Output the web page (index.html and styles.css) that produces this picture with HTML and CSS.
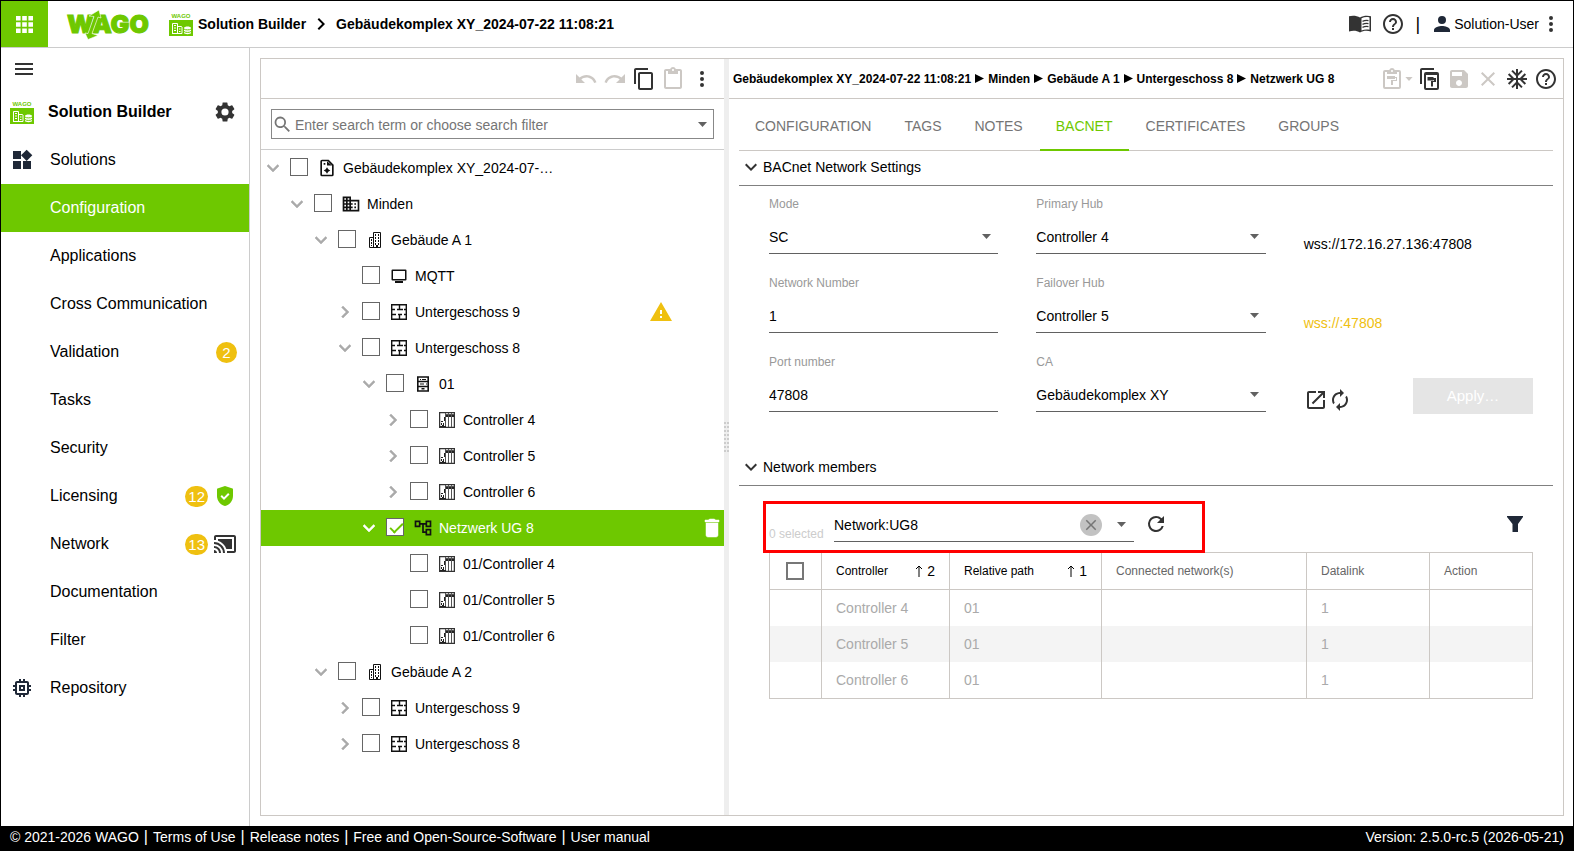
FILE: index.html
```html
<!DOCTYPE html>
<html lang="en">
<head>
    <meta charset="utf-8">
    <title>Solution Builder</title>
    <link rel="stylesheet" href="styles.css">
</head>
<body>
    <!-- icon definitions -->
    <svg class="defs" aria-hidden="true">
        <symbol id="i-down" viewBox="0 0 24 24"><path d="M16.59 8.59L12 13.17 7.41 8.59 6 10l6 6 6-6z"/></symbol>
        <symbol id="i-right" viewBox="0 0 24 24"><path d="M10 6L8.59 7.41 13.17 12l-4.58 4.59L10 18l6-6z"/></symbol>
        <symbol id="i-more" viewBox="0 0 24 24"><path d="M12 8a2 2 0 1 0 0-4 2 2 0 0 0 0 4zm0 2a2 2 0 1 0 0 4 2 2 0 0 0 0-4zm0 6a2 2 0 1 0 0 4 2 2 0 0 0 0-4z"/></symbol>
        <symbol id="i-help" viewBox="0 0 24 24"><path d="M11 18h2v-2h-2v2zm1-16C6.48 2 2 6.48 2 12s4.48 10 10 10 10-4.48 10-10S17.52 2 12 2zm0 18c-4.41 0-8-3.59-8-8s3.59-8 8-8 8 3.59 8 8-3.59 8-8 8zm0-14c-2.21 0-4 1.79-4 4h2c0-1.1.9-2 2-2s2 .9 2 2c0 2-3 1.75-3 5h2c0-2.25 3-2.5 3-5 0-2.21-1.79-4-4-4z"/></symbol>
        <symbol id="i-caret" viewBox="0 0 9 5"><path d="M0 0h9L4.500 5z"/></symbol>
        <symbol id="i-close" viewBox="0 0 24 24"><path d="M19 6.410L17.590 5 12 10.590 6.410 5 5 6.410 10.590 12 5 17.590 6.410 19 12 13.410 17.590 19 19 17.590 13.410 12z"/></symbol>
        <symbol id="i-play" viewBox="0 0 9 9"><path d="M0 0l9 4.500L0 9z"/></symbol>
        <symbol id="i-project" viewBox="0 0 24 24">
            <path d="M14 2H6a2 2 0 0 0-2 2v16a2 2 0 0 0 2 2h12a2 2 0 0 0 2-2V8l-6-6zM6 20V4h7l5 5v11H6z"/>
            <path d="M12 11l1.500 2.500 2.500 1.500-2.500 1.500L12 19l-1.500-2.500L8 15l2.500-1.500zM8 6h2v2H8zM12 4l6 5h-6z"/>
        </symbol>
        <symbol id="i-city" viewBox="0 0 24 24"><path d="M12 7V3H2v18h20V7H12zM6 19H4v-2h2v2zm0-4H4v-2h2v2zm0-4H4V9h2v2zm0-4H4V5h2v2zm4 12H8v-2h2v2zm0-4H8v-2h2v2zm0-4H8V9h2v2zm0-4H8V5h2v2zm10 12h-8v-2h2v-2h-2v-2h2v-2h-2V9h8v10zm-2-8h-2v2h2v-2zm0 4h-2v2h2v-2z"/></symbol>
        <symbol id="i-building" viewBox="0 0 16 16">
            <path d="M2.500 15.500v-10h4v-5h7v15z" fill="none" stroke="currentColor"/>
            <path d="M6 5h1v11H6zM8 2h1v2H8zM11 2h1v2h-1zM8 5h1v2H8zM11 5h1v2h-1zM8 8h1v2H8zM11 8h1v2h-1zM8 11h1v2H8zM11 11h1v2h-1zM4 7h1v2H4zM4 10h1v2H4zM9 13h2v3H9zM4 13h1v1H4z"/>
        </symbol>
        <symbol id="i-monitor" viewBox="0 0 16 16"><path d="M1.500 1.500h13a1 1 0 0 1 1 1v9a1 1 0 0 1-1 1h-13a1 1 0 0 1-1-1v-9a1 1 0 0 1 1-1zM2 3v8h12V3zM4 12h8v3H4z" fill-rule="evenodd"/></symbol>
        <symbol id="i-floor" viewBox="0 0 16 16">
            <path d="M.7.7h14.600v14.600H.700zM8.500 1v4.500M6 5.500h6M1 5.500h3M1 10.500h4M7 10.500h4M13 10.500h2M8.500 10.500V15M13 5.500h2" fill="none" stroke="currentColor" stroke-width="1.400"/>
        </symbol>
        <symbol id="i-rack" viewBox="0 0 16 16">
            <path d="M2.800 1h10.400v14H2.800zM3 5.500h10M3 10.500h10" fill="none" stroke="currentColor" stroke-width="1.600"/>
            <path d="M5 3h1v1H5zM7 3h4v1H7zM5 7.500h4v1H5zM11 7.500h1v1h-1zM6.500 12h3v1.500h-3z"/>
        </symbol>
        <symbol id="i-controller" viewBox="0 0 16 16">
            <path d="M.6.6h14.800v14.800H.600z" fill="none" stroke="#333" stroke-width="1.300"/>
            <path d="M6 1h1v14H6zM9 1h1v14H9zM12 1h1v14h-1zM6 2h9v1H6z" fill="#555"/>
            <path d="M7 3h2v2H7zM10 3h2v2h-2zM13 3h2v2h-2zM5 5h1v4H5zM2 9h2v1H2zM2 11h1v2H2zM4 11h1v2H4zM3 13h2v1H3zM1 14h6v1H1z" fill="#222"/>
        </symbol>
        <symbol id="i-network" viewBox="0 0 24 24"><path d="M22 11V3h-7v3H9V3H2v8h7V8h2v10h4v3h7v-8h-7v3h-2V8h2v3h7zM7 9H4V5h3v4zm10 6h3v4h-3v-4zm0-10h3v4h-3V5z"/></symbol>
        <symbol id="i-app" viewBox="0 0 24 24">
            <text x="12" y="6" text-anchor="middle" class="app-icon-text" fill="#6ec800">WAGO</text>
            <path d="M0 8h24v16H0z" fill="#6ec800"/>
            <path d="M3.500 22V11.500h5V22M8.500 14.500h4l.5.5v6.500H3M5 13.500h2M5 16h2M5 18.500h2M10 17h1.500M10 19.500h1.500" fill="none" stroke="#fff"/>
            <path d="M15 16c0-2 7-2 7 0v5c0 1.500-7 1.500-7 0z" fill="#fff"/>
            <path d="M15 17c1 1.200 6 1.200 7 0M15 19.500c1 1.200 6 1.200 7 0" fill="none" stroke="#6ec800"/>
        </symbol>
    </svg>

    <div class="page">
        <header class="topbar">
            <button class="apps" aria-label="Apps">
                <svg width="17" height="17" viewBox="0 0 17 17"><path d="M0 0h4.600v4.600H0zM6.200 0h4.600v4.600H6.200zM12.400 0H17v4.600h-4.600zM0 6.200h4.600v4.600H0zM6.200 6.200h4.600v4.600H6.200zM12.400 6.200H17v4.600h-4.600zM0 12.400h4.600V17H0zM6.200 12.400h4.600V17H6.200zM12.400 12.400H17V17h-4.600z"/></svg>
            </button>
            <a href="#" class="logo" aria-label="WAGO">
                <svg width="86" height="32" viewBox="0 0 86 32">
                    <text x="1" y="25" class="logo-text">WAGO</text>
                    <path d="M23 8l10-6 2 8-3-1-6 16.500 6 2L22 31.500 19 25l3 .5L28 8.500z" stroke="#fff" stroke-width=".6"/>
                </svg>
            </a>
            <a href="#" class="brand"><svg class="icon"><use href="#i-app"/></svg>Solution Builder</a>
            <svg class="icon crumb-arrow"><use href="#i-right"/></svg>
            <span class="project">Gebäudekomplex XY_2024-07-22 11:08:21</span>
            <div class="topbar-right">
                <button aria-label="Manual">
                    <svg class="icon" viewBox="0 0 24 24"><path d="M12 5.500C9 3.500 4 3.300 1 4.300V19.500c4-1.100 8-.8 11 1 3-1.800 7-2.100 11-1V4.300c-3-1-8-.8-11 1.200zm9.500 12.300c-2.700-.6-5.500-.4-8 .7V6.300c2.500-1.300 5.500-1.500 8-.9z"/><path d="M14.500 9.300c1.800-.8 4-1 6-.7M14.500 12.300c1.800-.8 4-1 6-.7M14.500 15.300c1.800-.8 4-1 6-.7" fill="none" stroke="currentColor" stroke-width="1.300"/></svg>
                </button>
                <button aria-label="Help"><svg class="icon"><use href="#i-help"/></svg></button>
                <span class="divider">|</span>
                <button class="user"><svg class="icon navy" viewBox="0 0 24 24"><path d="M12 12a4 4 0 1 0 0-8 4 4 0 0 0 0 8zm0 2c-2.670 0-8 1.340-8 4v2h16v-2c0-2.660-5.330-4-8-4z"/></svg>Solution-User</button>
                <button aria-label="More"><svg class="icon"><use href="#i-more"/></svg></button>
            </div>
        </header>

        <div class="content">
            <nav class="sidebar">
                <button class="menu" aria-label="Menu"><svg class="icon" viewBox="0 0 24 24"><path d="M3 18h18v-2H3v2zm0-5h18v-2H3v2zm0-7v2h18V6H3z"/></svg></button>
                <a href="#" class="nav-item title">
                    <svg class="icon"><use href="#i-app"/></svg>
                    <span>Solution Builder</span>
                    <svg class="icon" viewBox="0 0 24 24"><path d="M19.140 12.940c.04-.3.06-.61.06-.94 0-.32-.02-.64-.07-.94l2.030-1.580a.49.49 0 0 0 .12-.61l-1.920-3.320a.488.488 0 0 0-.59-.22l-2.390.96c-.5-.38-1.030-.7-1.620-.94l-.36-2.540a.484.484 0 0 0-.48-.41h-3.840c-.24 0-.43.17-.47.41l-.36 2.540c-.59.24-1.130.57-1.620.94l-2.390-.96c-.22-.08-.47 0-.59.22L2.740 8.870c-.12.21-.08.47.12.61l2.030 1.580c-.05.3-.09.63-.09.94s.02.64.07.94l-2.030 1.580a.49.49 0 0 0-.12.61l1.920 3.320c.12.22.37.29.59.22l2.390-.96c.5.38 1.030.7 1.620.94l.36 2.540c.05.24.24.41.48.41h3.840c.24 0 .44-.17.47-.41l.36-2.540c.59-.24 1.130-.56 1.620-.94l2.390.96c.22.08.47 0 .59-.22l1.920-3.320c.12-.22.07-.47-.12-.61l-2.010-1.580zM12 15.600a3.600 3.600 0 1 1 0-7.200 3.600 3.600 0 0 1 0 7.200z"/></svg>
                </a>
                <a href="#" class="nav-item"><svg class="icon navy" viewBox="0 0 24 24"><path d="M13 13v8h8v-8h-8zM3 21h8v-8H3v8zM3 3v8h8V3H3zm13.660-1.310L11 7.340 16.660 13l5.660-5.660-5.660-5.650z"/></svg><span>Solutions</span></a>
                <a href="#" class="nav-item sub active"><span>Configuration</span></a>
                <a href="#" class="nav-item sub"><span>Applications</span></a>
                <a href="#" class="nav-item sub"><span>Cross Communication</span></a>
                <a href="#" class="nav-item sub"><span>Validation</span><b class="badge">2</b></a>
                <a href="#" class="nav-item sub"><span>Tasks</span></a>
                <a href="#" class="nav-item sub"><span>Security</span></a>
                <a href="#" class="nav-item sub"><span>Licensing</span><b class="badge">12</b><svg class="icon shield" viewBox="0 0 24 24"><path d="M12 2L4.500 4.500Q4 4.700 4 5.500V12c0 5 3.500 8.800 8 10 4.500-1.200 8-5 8-10V5.500q0-.8-.5-1z"/><path d="M8.200 11.800l2.800 2.800 4.800-4.800" fill="none" stroke="#fff" stroke-width="2"/></svg></a>
                <a href="#" class="nav-item sub"><span>Network</span><b class="badge">13</b><svg class="icon" viewBox="0 0 24 24"><path d="M1 18v3h3c0-1.660-1.340-3-3-3zm0-4v2c2.760 0 5 2.240 5 5h2c0-3.870-3.130-7-7-7zm18-7H5v1.630c3.960 1.280 7.090 4.410 8.370 8.370H19V7zM1 10v2a9 9 0 0 1 9 9h2c0-6.080-4.930-11-11-11zm20-7H3c-1.100 0-2 .9-2 2v3h2V5h18v14h-7v2h7c1.100 0 2-.9 2-2V5c0-1.100-.9-2-2-2z"/></svg></a>
                <a href="#" class="nav-item sub"><span>Documentation</span></a>
                <a href="#" class="nav-item sub"><span>Filter</span></a>
                <a href="#" class="nav-item"><svg class="icon navy" viewBox="0 0 24 24"><path d="M15 9H9v6h6V9zm-2 4h-2v-2h2v2zm8-2V9h-2V7c0-1.100-.9-2-2-2h-2V3h-2v2h-2V3H9v2H7c-1.100 0-2 .9-2 2v2H3v2h2v2H3v2h2v2c0 1.100.9 2 2 2h2v2h2v-2h2v2h2v-2h2c1.100 0 2-.9 2-2v-2h2v-2h-2v-2h2zm-4 6H7V7h10v10z"/></svg><span>Repository</span></a>
            </nav>

            <main class="workspace">
                <section class="tree-panel">
                    <div class="toolbar">
                        <button disabled aria-label="Undo"><svg class="icon" viewBox="0 0 24 24"><path d="M12.500 8c-2.650 0-5.050.99-6.900 2.600L2 7v9h9l-3.620-3.620c1.390-1.160 3.160-1.880 5.120-1.880 3.540 0 6.550 2.310 7.600 5.500l2.370-.78C21.080 11.030 17.150 8 12.500 8z"/></svg></button>
                        <button disabled aria-label="Redo"><svg class="icon" viewBox="0 0 24 24"><path d="M18.400 10.600C16.550 8.990 14.150 8 11.500 8c-4.650 0-8.580 3.030-9.960 7.220L3.900 16c1.050-3.190 4.050-5.500 7.600-5.500 1.950 0 3.730.72 5.120 1.880L13 16h9V7l-3.600 3.600z"/></svg></button>
                        <button aria-label="Copy"><svg class="icon" viewBox="0 0 24 24"><path d="M16 1H4c-1.100 0-2 .9-2 2v14h2V3h12V1zm3 4H8c-1.100 0-2 .9-2 2v14c0 1.100.9 2 2 2h11c1.100 0 2-.9 2-2V7c0-1.100-.9-2-2-2zm0 16H8V7h11v14z"/></svg></button>
                        <button disabled aria-label="Paste"><svg class="icon" viewBox="0 0 24 24"><path d="M19 2h-4.180C14.400.84 13.300 0 12 0c-1.300 0-2.400.84-2.820 2H5c-1.100 0-2 .9-2 2v16c0 1.100.9 2 2 2h14c1.100 0 2-.9 2-2V4c0-1.100-.9-2-2-2zm-7 0c.55 0 1 .45 1 1s-.45 1-1 1-1-.45-1-1 .45-1 1-1zm7 18H5V4h2v3h10V4h2v16z"/></svg></button>
                        <button aria-label="More actions"><svg class="icon"><use href="#i-more"/></svg></button>
                    </div>
                    <div class="search-row">
                        <label class="search">
                            <svg class="search-icon" viewBox="0 0 24 24"><path d="M15.500 14h-.79l-.28-.27A6.500 6.500 0 1 0 13.730 14.430l.27.28v.79l5 4.990L20.490 19l-4.990-5zm-6 0a4.500 4.500 0 1 1 0-9 4.500 4.500 0 0 1 0 9z"/></svg>
                            <input type="text" placeholder="Enter search term or choose search filter" aria-label="Search">
                            <svg class="caret"><use href="#i-caret"/></svg>
                        </label>
                    </div>
                    <ul class="tree">
                        <li class="level-0"><button aria-label="Collapse"><svg class="icon"><use href="#i-down"/></svg></button><label><input type="checkbox"><svg class="node-icon"><use href="#i-project"/></svg>Gebäudekomplex XY_2024-07-…</label></li>
                        <li class="level-1"><button aria-label="Collapse"><svg class="icon"><use href="#i-down"/></svg></button><label><input type="checkbox"><svg class="node-icon"><use href="#i-city"/></svg>Minden</label></li>
                        <li class="level-2"><button aria-label="Collapse"><svg class="icon"><use href="#i-down"/></svg></button><label><input type="checkbox"><svg class="node-icon small"><use href="#i-building"/></svg>Gebäude A 1</label></li>
                        <li class="level-3 leaf"><label><input type="checkbox"><svg class="node-icon small"><use href="#i-monitor"/></svg>MQTT</label></li>
                        <li class="level-3"><button aria-label="Expand"><svg class="icon"><use href="#i-right"/></svg></button><label><input type="checkbox"><svg class="node-icon small"><use href="#i-floor"/></svg>Untergeschoss 9</label><svg class="icon warning" viewBox="0 0 24 24"><path d="M1 21h22L12 2 1 21zm12-3h-2v-2h2v2zm0-4h-2v-4h2v4z"/></svg></li>
                        <li class="level-3"><button aria-label="Collapse"><svg class="icon"><use href="#i-down"/></svg></button><label><input type="checkbox"><svg class="node-icon small"><use href="#i-floor"/></svg>Untergeschoss 8</label></li>
                        <li class="level-4"><button aria-label="Collapse"><svg class="icon"><use href="#i-down"/></svg></button><label><input type="checkbox"><svg class="node-icon small"><use href="#i-rack"/></svg>01</label></li>
                        <li class="level-5"><button aria-label="Expand"><svg class="icon"><use href="#i-right"/></svg></button><label><input type="checkbox"><svg class="node-icon small"><use href="#i-controller"/></svg>Controller 4</label></li>
                        <li class="level-5"><button aria-label="Expand"><svg class="icon"><use href="#i-right"/></svg></button><label><input type="checkbox"><svg class="node-icon small"><use href="#i-controller"/></svg>Controller 5</label></li>
                        <li class="level-5"><button aria-label="Expand"><svg class="icon"><use href="#i-right"/></svg></button><label><input type="checkbox"><svg class="node-icon small"><use href="#i-controller"/></svg>Controller 6</label></li>
                        <li class="level-4 selected"><button aria-label="Collapse"><svg class="icon"><use href="#i-down"/></svg></button><label><input type="checkbox" checked><svg class="node-icon"><use href="#i-network"/></svg>Netzwerk UG 8</label><button class="delete" aria-label="Delete"><svg class="icon" viewBox="0 0 24 24"><path d="M6 19c0 1.100.9 2 2 2h8c1.100 0 2-.9 2-2V7H6v12zM19 4h-3.500l-1-1h-5l-1 1H5v2h14V4z"/></svg></button></li>
                        <li class="level-5 leaf"><label><input type="checkbox"><svg class="node-icon small"><use href="#i-controller"/></svg>01/Controller 4</label></li>
                        <li class="level-5 leaf"><label><input type="checkbox"><svg class="node-icon small"><use href="#i-controller"/></svg>01/Controller 5</label></li>
                        <li class="level-5 leaf"><label><input type="checkbox"><svg class="node-icon small"><use href="#i-controller"/></svg>01/Controller 6</label></li>
                        <li class="level-2"><button aria-label="Collapse"><svg class="icon"><use href="#i-down"/></svg></button><label><input type="checkbox"><svg class="node-icon small"><use href="#i-building"/></svg>Gebäude A 2</label></li>
                        <li class="level-3"><button aria-label="Expand"><svg class="icon"><use href="#i-right"/></svg></button><label><input type="checkbox"><svg class="node-icon small"><use href="#i-floor"/></svg>Untergeschoss 9</label></li>
                        <li class="level-3"><button aria-label="Expand"><svg class="icon"><use href="#i-right"/></svg></button><label><input type="checkbox"><svg class="node-icon small"><use href="#i-floor"/></svg>Untergeschoss 8</label></li>
                    </ul>
                </section>

                <div class="splitter"><div class="grip"></div></div>

                <section class="detail-panel">
                    <div class="toolbar">
                        <div class="path">
                            <span>Gebäudekomplex XY_2024-07-22 11:08:21</span><svg><use href="#i-play"/></svg>
                            <span>Minden</span><svg><use href="#i-play"/></svg>
                            <span>Gebäude A 1</span><svg><use href="#i-play"/></svg>
                            <span>Untergeschoss 8</span><svg><use href="#i-play"/></svg>
                            <span>Netzwerk UG 8</span>
                        </div>
                        <button disabled class="split-button" aria-label="Paste settings">
                            <svg class="icon" viewBox="0 0 24 24"><path d="M19 3h-4.200a3 3 0 0 0-5.600 0H5a2 2 0 0 0-2 2v15a2 2 0 0 0 2 2h14a2 2 0 0 0 2-2V5a2 2 0 0 0-2-2zm-7 0a1 1 0 1 1 0 2 1 1 0 0 1 0-2zm7 17H5V5h2v2h10V5h2z"/><path d="M7 9h8v1h2v4h-4v4h-2v-5h5v-2h-1v1H7z"/></svg>
                            <svg class="mini-caret"><use href="#i-caret"/></svg>
                        </button>
                        <button aria-label="Copy settings"><svg class="icon" viewBox="0 0 24 24"><path d="M16 1H4c-1.100 0-2 .9-2 2v14h2V3h12zM8 5a2 2 0 0 0-2 2v14a2 2 0 0 0 2 2h11a2 2 0 0 0 2-2V7a2 2 0 0 0-2-2zm0 3h11v13H8z"/><path d="M9.500 10h6v1H18v4h-3v4.500h-2V14h3v-1h-.5v.5h-6z"/></svg></button>
                        <button disabled aria-label="Save"><svg class="icon" viewBox="0 0 24 24"><path d="M17 3H5c-1.110 0-2 .9-2 2v14c0 1.100.89 2 2 2h14c1.100 0 2-.9 2-2V7l-4-4zm-5 16c-1.660 0-3-1.340-3-3s1.340-3 3-3 3 1.340 3 3-1.340 3-3 3zm3-10H5V5h10v4z"/></svg></button>
                        <button disabled aria-label="Discard"><svg class="icon"><use href="#i-close"/></svg></button>
                        <button aria-label="Freeze"><svg class="icon" viewBox="0 0 24 24"><path d="M22 11h-4.170l3.240-3.240-1.410-1.420L15 11h-2V9l4.660-4.660-1.420-1.410L13 6.170V2h-2v4.170L7.760 2.930 6.340 4.340 11 9v2H9L4.340 6.340 2.930 7.760 6.170 11H2v2h4.170l-3.240 3.240 1.410 1.420L9 13h2v2l-4.660 4.660 1.420 1.410L11 17.830V22h2v-4.170l3.240 3.240 1.420-1.410L13 15v-2h2l4.660 4.660 1.410-1.420L17.830 13H22z"/></svg></button>
                        <button aria-label="Help"><svg class="icon"><use href="#i-help"/></svg></button>
                    </div>

                    <div class="detail-body">
                        <div class="tabs">
                            <button>CONFIGURATION</button>
                            <button>TAGS</button>
                            <button>NOTES</button>
                            <button class="active">BACNET</button>
                            <button>CERTIFICATES</button>
                            <button>GROUPS</button>
                        </div>

                        <button class="section-head"><svg class="icon"><use href="#i-down"/></svg>BACnet Network Settings</button>
                        <div class="settings">
                            <div class="field">
                                <label for="mode">Mode</label>
                                <div class="control"><select id="mode"><option>SC</option></select><svg class="caret"><use href="#i-caret"/></svg></div>
                            </div>
                            <div class="field">
                                <label for="primary">Primary Hub</label>
                                <div class="control"><select id="primary"><option>Controller 4</option></select><svg class="caret"><use href="#i-caret"/></svg></div>
                            </div>
                            <p class="address">wss://172.16.27.136:47808</p>

                            <div class="field">
                                <label for="netnum">Network Number</label>
                                <div class="control"><input id="netnum" type="text" value="1"></div>
                            </div>
                            <div class="field">
                                <label for="failover">Failover Hub</label>
                                <div class="control"><select id="failover"><option>Controller 5</option></select><svg class="caret"><use href="#i-caret"/></svg></div>
                            </div>
                            <p class="address warn">wss://:47808</p>

                            <div class="field">
                                <label for="port">Port number</label>
                                <div class="control"><input id="port" type="text" value="47808"></div>
                            </div>
                            <div class="field">
                                <label for="ca">CA</label>
                                <div class="control"><select id="ca"><option>Gebäudekomplex XY</option></select><svg class="caret"><use href="#i-caret"/></svg></div>
                            </div>
                            <div class="ca-actions">
                                <button aria-label="Open"><svg class="icon" viewBox="0 0 24 24"><path d="M19 19H5V5h7V3H5c-1.110 0-2 .9-2 2v14c0 1.100.89 2 2 2h14c1.100 0 2-.9 2-2v-7h-2v7zM14 3v2h3.590l-9.830 9.830 1.410 1.410L19 6.410V10h2V3h-7z"/></svg></button>
                                <button aria-label="Renew"><svg class="icon" viewBox="0 0 24 24"><path d="M12 6v3l4-4-4-4v3c-4.420 0-8 3.580-8 8 0 1.570.46 3.030 1.240 4.260L6.700 14.800A5.870 5.870 0 0 1 6 12c0-3.310 2.690-6 6-6zm6.760 1.740L17.300 9.200c.44.84.7 1.790.7 2.800 0 3.310-2.690 6-6 6v-3l-4 4 4 4v-3c4.420 0 8-3.580 8-8 0-1.570-.46-3.030-1.240-4.260z"/></svg></button>
                                <button class="apply" disabled>Apply…</button>
                            </div>
                        </div>

                        <button class="section-head"><svg class="icon"><use href="#i-down"/></svg>Network members</button>
                        <div class="members">
                            <div class="members-bar">
                                <div class="highlight">
                                    <span class="count">0 selected</span>
                                    <div class="control">
                                        <select aria-label="Network"><option>Network:UG8</option></select>
                                        <button class="clear" aria-label="Clear"><svg viewBox="0 0 24 24"><use href="#i-close"/></svg></button>
                                        <svg class="caret"><use href="#i-caret"/></svg>
                                    </div>
                                    <button aria-label="Refresh"><svg class="icon" viewBox="0 0 24 24"><path d="M17.650 6.350A7.960 7.960 0 0 0 12 4a8 8 0 1 0 7.730 10h-2.080A6 6 0 1 1 12 6c1.660 0 3.140.69 4.220 1.780L13 11h7V4l-2.350 2.350z"/></svg></button>
                                </div>
                                <button class="filter" aria-label="Filter"><svg width="16" height="16" viewBox="0 0 16 16"><path d="M0 0h16v1l-5 7v8H5.500V8L0 1z"/></svg></button>
                            </div>
                            <table>
                                <thead>
                                    <tr>
                                        <th class="c-check"><input type="checkbox" aria-label="Select all"></th>
                                        <th class="c-name sorted"><div>Controller<span class="sort"><svg viewBox="0 0 8 12"><path d="M4 12V1M1 4l3-3 3 3"/></svg>2</span></div></th>
                                        <th class="c-path sorted"><div>Relative path<span class="sort"><svg viewBox="0 0 8 12"><path d="M4 12V1M1 4l3-3 3 3"/></svg>1</span></div></th>
                                        <th class="c-conn">Connected network(s)</th>
                                        <th class="c-link">Datalink</th>
                                        <th>Action</th>
                                    </tr>
                                </thead>
                                <tbody>
                                    <tr><td></td><td>Controller 4</td><td>01</td><td></td><td>1</td><td></td></tr>
                                    <tr><td></td><td>Controller 5</td><td>01</td><td></td><td>1</td><td></td></tr>
                                    <tr><td></td><td>Controller 6</td><td>01</td><td></td><td>1</td><td></td></tr>
                                </tbody>
                            </table>
                        </div>
                    </div>
                </section>
            </main>
        </div>

        <footer class="footer">
            <span>© 2021-2026 WAGO</span><i>|</i>
            <a href="#">Terms of Use</a><i>|</i>
            <a href="#">Release notes</a><i>|</i>
            <a href="#">Free and Open-Source-Software</a><i>|</i>
            <a href="#">User manual</a>
            <span class="version">Version: 2.5.0-rc.5 (2026-05-21)</span>
        </footer>
    </div>
</body>
</html>
```
FILE: styles.css
```css
* {
    box-sizing: border-box;
}

body {
    margin: 0;
    font-family: "Liberation Sans", Arial, sans-serif;
    font-size: 14px;
    color: #000;
    background: #fff;
}

button, input, select {
    font: inherit;
    color: inherit;
    margin: 0;
    padding: 0;
    border: 0;
    background: none;
    border-radius: 0;
    outline: none;
}

button {
    display: flex;
    align-items: center;
    justify-content: center;
    color: #333;
    cursor: pointer;
}

button:disabled {
    color: #ccc8c4;
    cursor: default;
}

a {
    color: inherit;
    text-decoration: none;
}

svg {
    display: block;
    flex-shrink: 0;
    fill: currentColor;
}

.defs {
    display: none;
}

.icon {
    width: 24px;
    height: 24px;
}

.navy {
    color: #1f2837;
}

.page {
    display: flex;
    flex-direction: column;
    min-height: 100vh;
    border: 1px solid #000;
    border-bottom: 0;
}

/* top bar */
.topbar {
    display: flex;
    align-items: center;
    height: 47px;
    border-bottom: 1px solid #ccc;
    font-weight: bold;
}

.apps {
    width: 47px;
    height: 46px;
    background: #6ec800;
    color: #fff;
}

.logo {
    margin-left: 18px;
    color: #6ec800;
}

.logo-text {
    font-family: Inter, "Liberation Sans", sans-serif;
    font-size: 25px;
    font-weight: 900;
    stroke: currentColor;
    stroke-width: 1px;
}

.app-icon-text {
    font-size: 6px;
    font-weight: bold;
}

.brand {
    display: flex;
    align-items: center;
    gap: 5px;
    margin-left: 17px;
}

.crumb-arrow {
    margin: 0 3px 0 3px;
}

.topbar-right {
    display: flex;
    align-items: center;
    gap: 9px;
    margin-left: auto;
    padding-right: 10px;
    font-weight: normal;
}

.divider {
    font-size: 18px;
    line-height: 24px;
    padding: 0 1px;
}

.user {
    color: #000;
}

.user + button {
    margin-left: -9px;
}

/* sidebar */
.content {
    display: flex;
    flex: 1;
}

.sidebar {
    width: 249px;
    flex-shrink: 0;
    border-right: 1px solid #ccc;
    color: #000;
    font-size: 16px;
}

.menu {
    height: 40px;
    margin-left: 11px;
    padding-top: 2px;
}

.nav-item {
    display: flex;
    align-items: center;
    gap: 5px;
    height: 48px;
    padding: 0 12px 0 9px;
}

.nav-item > span {
    flex: 1;
    padding-left: 11px;
}

.nav-item.sub {
    padding-left: 38px;
}

.nav-item.title {
    font-weight: bold;
}

.nav-item.title > span {
    padding-left: 9px;
}

.nav-item .icon:last-child {
    color: #333;
}

.nav-item.active {
    background: #6ec800;
    color: #fff;
}

.badge {
    min-width: 21px;
    height: 21px;
    padding: 0 3px;
    border-radius: 11px;
    background: #efc010;
    color: #fff;
    font-size: 15px;
    font-weight: normal;
    line-height: 21px;
    text-align: center;
}

.nav-item .shield:last-child {
    color: #6ec800;
}

/* workspace */
.workspace {
    display: flex;
    flex: 1;
    min-width: 0;
    margin: 10px 9px 10px 10px;
    border: 1px solid #ccc8c4;
}

.tree-panel {
    flex: 0 0 463px;
}

.detail-panel {
    flex: 1;
    min-width: 0;
}

.toolbar {
    display: flex;
    align-items: center;
    justify-content: flex-end;
    gap: 5px;
    height: 40px;
    padding-right: 10px;
    border-bottom: 1px solid #ccc8c4;
}

.detail-panel .toolbar {
    padding: 0 5px 0 4px;
}

.search-row {
    padding: 10px;
    border-bottom: 1px solid #ccc;
}

.search {
    display: flex;
    align-items: center;
    height: 30px;
    border: 1px solid #888;
    padding: 0 6px 0 0;
}

.search input {
    flex: 1;
    min-width: 0;
    padding: 2px 0 0 2px;
}

.search input::placeholder {
    color: #757575;
}

.search-icon {
    width: 21px;
    height: 21px;
    color: #757575;
}

.caret {
    width: 9px;
    height: 5px;
    color: #616161;
}

/* tree */
.tree {
    margin: 0;
    padding: 0;
    list-style: none;
}

.tree li {
    display: flex;
    align-items: center;
    height: 36px;
}

.tree li > button {
    color: #aaa;
}

.tree li > button .icon {
    stroke: currentColor;
    stroke-width: 0.5;
}

.tree label {
    display: flex;
    align-items: center;
    gap: 4px;
    margin-left: 5px;
}

.tree .leaf label {
    margin-left: 29px;
}

.level-1 {
    padding-left: 24px;
}

.level-2 {
    padding-left: 48px;
}

.level-3 {
    padding-left: 72px;
}

.level-4 {
    padding-left: 96px;
}

.level-5 {
    padding-left: 120px;
}

input[type="checkbox"] {
    appearance: none;
    display: block;
    flex-shrink: 0;
    width: 18px;
    height: 18px;
    border: 1px solid #666;
    background: #fff;
}

.tree input[type="checkbox"] {
    margin-bottom: 2px;
}

input[type="checkbox"]:checked::after {
    content: "";
    display: block;
    width: 11px;
    height: 5px;
    margin: 4px 0 0 3px;
    border: solid #6ec800;
    border-width: 0 0 2px 2px;
    transform: rotate(-45deg);
}

.node-icon {
    width: 20px;
    height: 20px;
    margin: 0 2px 0 5px;
    color: #111;
}

.node-icon.small {
    width: 16px;
    height: 16px;
    margin: 0 4px 0 7px;
}

.warning {
    margin: 0 51px 0 auto;
    color: #efc010;
}

.tree .selected {
    background: #6ec800;
    color: #fff;
}

.tree .selected button {
    color: #fff;
}

.delete {
    margin-left: auto;
}

.splitter {
    display: flex;
    align-items: center;
    width: 5px;
    background: #eee;
}

.grip {
    width: 5px;
    height: 31px;
    background:
        linear-gradient(90deg, transparent 2px, #eee 2px, #eee 3px, transparent 3px),
        repeating-linear-gradient(#ccc 0 2px, #eee 2px 4px);
}

/* detail panel */
.path {
    display: flex;
    align-items: center;
    gap: 4px;
    margin-right: auto;
    font-size: 12px;
    font-weight: bold;
    white-space: nowrap;
}

.path svg {
    width: 9px;
    height: 9px;
}

.split-button {
    gap: 1px;
}

.mini-caret {
    width: 8px;
    height: 4px;
}

.detail-body {
    padding: 0 10px;
}

.tabs {
    display: flex;
    gap: 1px;
    height: 52px;
    border-bottom: 1px solid #ccc8c4;
}

.tabs button {
    height: 52px;
    padding: 4px 16px 0;
    border-bottom: 2px solid transparent;
    color: #757575;
}

.tabs .active {
    border-color: #6ec800;
    color: #6ec800;
}

.section-head {
    justify-content: flex-start;
    width: 100%;
    height: 35px;
    padding-bottom: 2px;
    border-bottom: 1px solid #808080;
    color: #000;
}

.section-head .icon {
    color: #333;
}

.settings {
    display: grid;
    grid-template-columns: repeat(3, 1fr);
    grid-auto-rows: 79px;
    column-gap: 38px;
    padding: 5px 20px 23px 30px;
}

.field label {
    display: block;
    padding: 5px 0 10px;
    font-size: 12px;
    line-height: 16px;
    color: #999;
}

.control {
    display: flex;
    align-items: center;
    height: 32px;
    padding-bottom: 2px;
    border-bottom: 1px solid #616161;
}

.control input,
.control select {
    appearance: none;
    flex: 1;
    min-width: 0;
    height: 29px;
}

.control .caret {
    margin-right: 7px;
}

.address {
    margin: 0;
    padding-top: 44px;
    line-height: 18px;
}

.warn {
    color: #efc010;
}

.ca-actions {
    display: flex;
    align-items: center;
    padding-top: 22px;
}

.ca-actions .apply {
    width: 120px;
    height: 36px;
    margin: 0 0 8px auto;
    background: #e5e5e5;
    color: #fff;
    font-size: 15px;
}

.members {
    padding: 15px 20px 20px 30px;
}

.members-bar {
    display: flex;
    align-items: flex-start;
    justify-content: space-between;
}

.highlight {
    position: relative;
    display: flex;
    align-items: center;
    width: 442px;
    height: 52px;
    margin: 0 0 -1px -6px;
    padding-left: 3px;
    border: 3px solid #f00;
}

.count {
    width: 65px;
    padding-top: 14px;
    font-size: 12px;
    color: #ccc;
}

.highlight .control {
    width: 300px;
    margin: -2px 10px 0 0;
}

.highlight .control .caret {
    margin: 0 8px 0 15px;
}

.highlight > button {
    margin-top: -6px;
}

.clear {
    width: 22px;
    height: 22px;
    border-radius: 50%;
    background: #c2c2c2;
    color: #757575;
}

.clear svg {
    width: 18px;
    height: 18px;
}

.filter {
    width: 24px;
    height: 24px;
    margin: 11px 6px 0 0;
    color: #1f2837;
}

table {
    width: 100%;
    table-layout: fixed;
    border-collapse: collapse;
    border: 1px solid #ccc8c4;
}

th, td {
    height: 36px;
    padding: 0 14px;
    border-left: 1px solid #ccc8c4;
    text-align: left;
}

th {
    height: 37px;
    border-bottom: 1px solid #ccc8c4;
    font-size: 12px;
    font-weight: normal;
    color: #666;
}

td {
    color: #aaa;
}

tbody tr:nth-child(even) {
    background: #f4f4f4;
}

tbody tr:last-child td {
    height: 37px;
}

.sorted {
    color: #000;
}

.sorted div {
    display: flex;
    align-items: center;
}

.sort {
    display: flex;
    align-items: center;
    gap: 4px;
    margin-left: auto;
    font-size: 14px;
}

.sort svg {
    width: 8px;
    height: 12px;
    fill: none;
    stroke: currentColor;
}

th input[type="checkbox"] {
    margin-left: 2px;
    border: 2px solid #777;
}

.c-check {
    width: 52px;
}

.c-name {
    width: 128px;
}

.c-path {
    width: 152px;
}

.c-conn {
    width: 205px;
}

.c-link {
    width: 123px;
}

/* footer */
.footer {
    display: flex;
    align-items: center;
    gap: 5px;
    height: 25px;
    margin: 0 -1px;
    padding: 0 10px 4px;
    background: #000;
    color: #fff;
}

.footer i {
    font-size: 16px;
    font-style: normal;
    line-height: 20px;
}

.version {
    margin-left: auto;
}
```
